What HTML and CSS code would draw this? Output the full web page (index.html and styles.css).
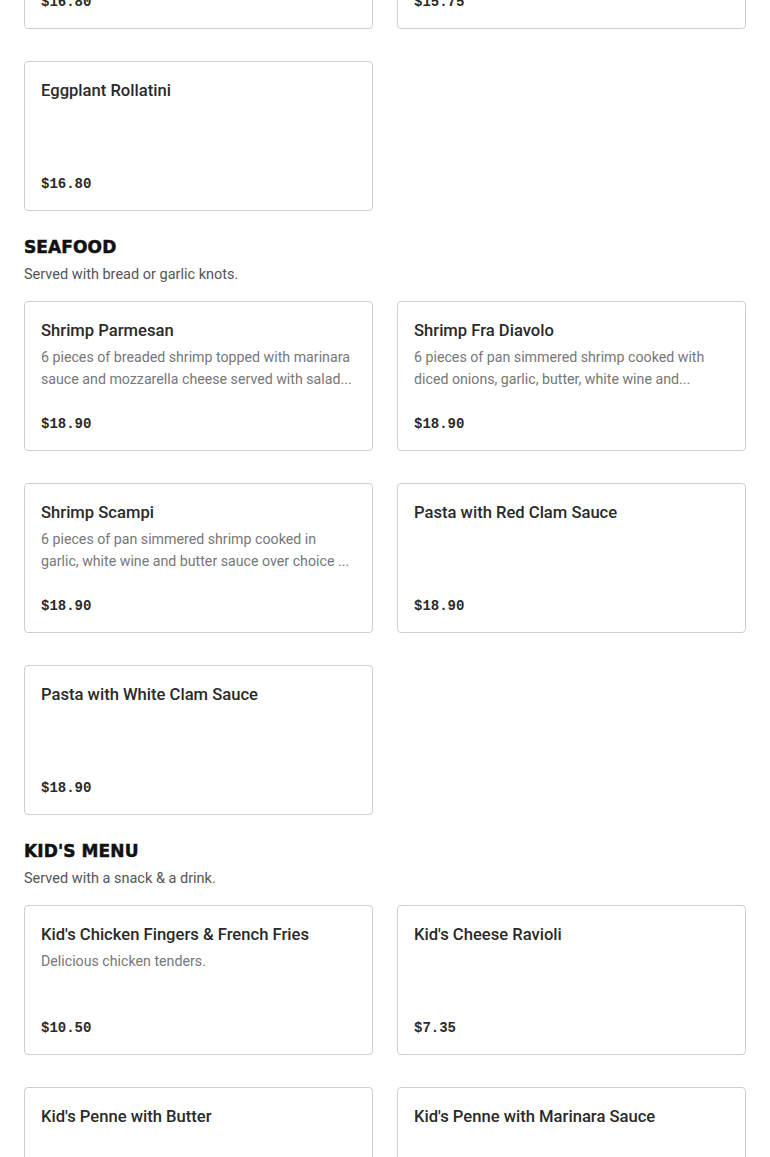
FILE: index.html
```html
<!DOCTYPE html>
<html lang="en">
<head>
<meta charset="utf-8">
<title>Menu</title>
<link rel="stylesheet" href="styles.css">
</head>
<body>
<main class="menu">
  <section class="section first">
    <div class="grid">
      <div class="card">
        <div class="card-name">Chicken Rollatini</div>
        <div class="card-price">$16.80</div>
      </div>
      <div class="card">
        <div class="card-name">Baked Ziti</div>
        <div class="card-price">$15.75</div>
      </div>
      <div class="card">
        <div class="card-name">Eggplant Rollatini</div>
        <div class="card-price">$16.80</div>
      </div>
    </div>
  </section>

  <section class="section">
    <h2 class="section-title">SEAFOOD</h2>
    <p class="section-sub">Served with bread or garlic knots.</p>
    <div class="grid">
      <div class="card">
        <div class="card-name">Shrimp Parmesan</div>
        <div class="card-desc">6 pieces of breaded shrimp topped with marinara sauce and mozzarella cheese served with salad...</div>
        <div class="card-price">$18.90</div>
      </div>
      <div class="card">
        <div class="card-name">Shrimp Fra Diavolo</div>
        <div class="card-desc">6 pieces of pan simmered shrimp cooked with diced onions, garlic, butter, white wine and...</div>
        <div class="card-price">$18.90</div>
      </div>
      <div class="card">
        <div class="card-name">Shrimp Scampi</div>
        <div class="card-desc">6 pieces of pan simmered shrimp cooked in garlic, white wine and butter sauce over choice ...</div>
        <div class="card-price">$18.90</div>
      </div>
      <div class="card">
        <div class="card-name">Pasta with Red Clam Sauce</div>
        <div class="card-price">$18.90</div>
      </div>
      <div class="card">
        <div class="card-name">Pasta with White Clam Sauce</div>
        <div class="card-price">$18.90</div>
      </div>
    </div>
  </section>

  <section class="section">
    <h2 class="section-title">KID'S MENU</h2>
    <p class="section-sub">Served with a snack &amp; a drink.</p>
    <div class="grid">
      <div class="card">
        <div class="card-name">Kid's Chicken Fingers &amp; French Fries</div>
        <div class="card-desc">Delicious chicken tenders.</div>
        <div class="card-price">$10.50</div>
      </div>
      <div class="card">
        <div class="card-name">Kid's Cheese Ravioli</div>
        <div class="card-price">$7.35</div>
      </div>
      <div class="card">
        <div class="card-name">Kid's Penne with Butter</div>
        <div class="card-price">$7.35</div>
      </div>
      <div class="card">
        <div class="card-name">Kid's Penne with Marinara Sauce</div>
        <div class="card-price">$7.35</div>
      </div>
    </div>
  </section>
</main>
</body>
</html>
```

FILE: styles.css
```css
html, body {
  margin: 0;
  padding: 0;
  background: #ffffff;
}

body {
  font-family: "Roboto", "Liberation Sans", sans-serif;
  color: #2a2a2a;
}

.menu {
  padding: 0 24px;
  margin-top: -121px;
}

.section {
  margin-bottom: 24px;
}

.section-title {
  margin: 0;
  font-family: "DejaVu Sans", "Lato", sans-serif;
  font-weight: 700;
  font-size: 17px;
  line-height: 24px;
  letter-spacing: 0.1px;
  -webkit-text-stroke: 0.5px #111111;
  color: #111111;
}

.section-sub {
  margin: 5px 0 15px;
  font-size: 14.5px;
  line-height: 22px;
  color: #555555;
}

.grid {
  display: grid;
  grid-template-columns: 1fr 1fr;
  column-gap: 24px;
  row-gap: 32px;
}

.card {
  box-sizing: border-box;
  height: 150px;
  padding: 16px;
  border: 1px solid #cfcfcf;
  border-radius: 4px;
  display: flex;
  flex-direction: column;
  background: #ffffff;
}

.card-name {
  padding-top: 1px;
  font-size: 16.6px;
  line-height: 24px;
  font-weight: 500;
  color: #2a2a2a;
}

.card-desc {
  margin-top: 3px;
  font-size: 14.2px;
  line-height: 22px;
  color: #777777;
  display: -webkit-box;
  -webkit-line-clamp: 2;
  -webkit-box-orient: vertical;
  overflow: hidden;
}

.card-price {
  margin-top: auto;
  font-family: "Liberation Mono", "DejaVu Sans Mono", monospace;
  font-weight: 700;
  font-size: 14px;
  line-height: 20px;
  color: #2a2a2a;
}
```
